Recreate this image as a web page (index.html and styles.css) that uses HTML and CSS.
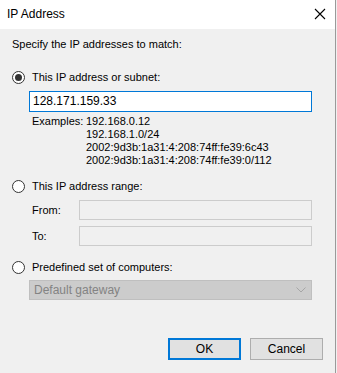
FILE: index.html
```html
<!DOCTYPE html>
<html>
<head>
<meta charset="utf-8">
<link rel="stylesheet" href="styles.css">
</head>
<body>
<div class="window">
  <div class="titlebar">
    <span class="title">IP Address</span>
    <svg class="close" width="12" height="12" viewBox="0 0 12 12"><path d="M1 1 L11 11 M11 1 L1 11" stroke="#000" stroke-width="1.1" fill="none"/></svg>
  </div>
  <div class="content">
    <div class="intro">Specify the IP addresses to match:</div>

    <div class="radio-row r1"><span class="radio checked"></span><span>This IP address or subnet:</span></div>
    <div class="textbox active">128.171.159.33</div>
    <div class="examples">
      <span class="ex-label">Examples:</span>
      <div class="ex-list">
        <div>192.168.0.12</div>
        <div>192.168.1.0/24</div>
        <div>2002:9d3b:1a31:4:208:74ff:fe39:6c43</div>
        <div>2002:9d3b:1a31:4:208:74ff:fe39:0/112</div>
      </div>
    </div>

    <div class="radio-row r2"><span class="radio"></span><span>This IP address range:</span></div>
    <div class="range-row from"><span class="range-label">From:</span><div class="textbox disabled"></div></div>
    <div class="range-row to"><span class="range-label">To:</span><div class="textbox disabled"></div></div>

    <div class="radio-row r3"><span class="radio"></span><span>Predefined set of computers:</span></div>
    <div class="select">
      <span>Default gateway</span>
      <svg width="10" height="6" viewBox="0 0 10 6"><path d="M0.5 0.5 L5 5 L9.5 0.5" stroke="#a6a6a6" stroke-width="1" fill="none"/></svg>
    </div>

    <div class="buttons">
      <div class="btn default">OK</div>
      <div class="btn">Cancel</div>
    </div>
  </div>
</div>
</body>
</html>
```
FILE: styles.css
```css
html, body {
  margin: 0;
  padding: 0;
  background: #f0f0f0;
}
body {
  width: 337px;
  height: 373px;
  overflow: hidden;
  font-family: "Liberation Sans", Arial, sans-serif;
  font-size: 11px;
  color: #000;
}
.window {
  width: 335px;
  height: 373px;
  border-right: 1px solid #9a9a9a;
  background: #f0f0f0;
}
.titlebar {
  height: 29px;
  background: #fff;
  display: flex;
  align-items: center;
  justify-content: space-between;
  padding: 0 9px 0 7px;
}
.title {
  font-size: 12px;
  margin-top: -1px;
}
.close {
  margin-top: -1px;
}
.content {
  padding: 0;
}
.intro {
  margin: 8px 0 0 12px;
  height: 14px;
  line-height: 14px;
}
.radio-row {
  display: flex;
  align-items: center;
  height: 14px;
  line-height: 14px;
  padding-left: 12px;
}
.radio-row .radio {
  width: 11px;
  height: 11px;
  border: 1px solid #333;
  border-radius: 50%;
  background: #fff;
  margin-right: 7px;
  position: relative;
  flex: none;
}
.radio.checked::after {
  content: "";
  position: absolute;
  left: 2px;
  top: 2px;
  width: 7px;
  height: 7px;
  border-radius: 50%;
  background: #333;
}
.r1 { margin-top: 19px; }
.r2 { margin-top: 12px; }
.r3 { margin-top: 14px; }
.textbox {
  box-sizing: border-box;
  height: 21px;
  line-height: 19px;
  padding-left: 3px;
  border: 1px solid #7a7a7a;
  background: #fff;
}
.textbox.active {
  margin: 7px 0 0 29px;
  width: 283px;
  border-color: #0078d7;
  font-size: 12px;
}
.examples {
  display: flex;
  margin: 3px 0 0 32px;
  line-height: 13px;
}
.ex-label {
  width: 54px;
}
.range-row {
  display: flex;
  align-items: center;
  margin-left: 32px;
}
.range-row.from { margin-top: 7px; }
.range-row.to { margin-top: 6px; }
.range-label {
  width: 47px;
}
.textbox.disabled {
  width: 233px;
  height: 20px;
  background: #f0f0f0;
  border-color: #cccccc;
}
.select {
  box-sizing: border-box;
  margin: 6px 0 0 29px;
  width: 283px;
  height: 20px;
  background: #cccccc;
  border: 1px solid #bfbfbf;
  color: #838383;
  display: flex;
  align-items: center;
  justify-content: space-between;
  padding: 0 5px 0 4px;
  font-size: 12px;
}
.buttons {
  display: flex;
  justify-content: flex-end;
  gap: 9px;
  margin: 38px 12px 0 0;
}
.btn {
  box-sizing: border-box;
  width: 73px;
  height: 22px;
  line-height: 20px;
  text-align: center;
  background: #e1e1e1;
  border: 1px solid #adadad;
  font-size: 12px;
}
.btn.default {
  border: 2px solid #0078d7;
  line-height: 18px;
}
```
